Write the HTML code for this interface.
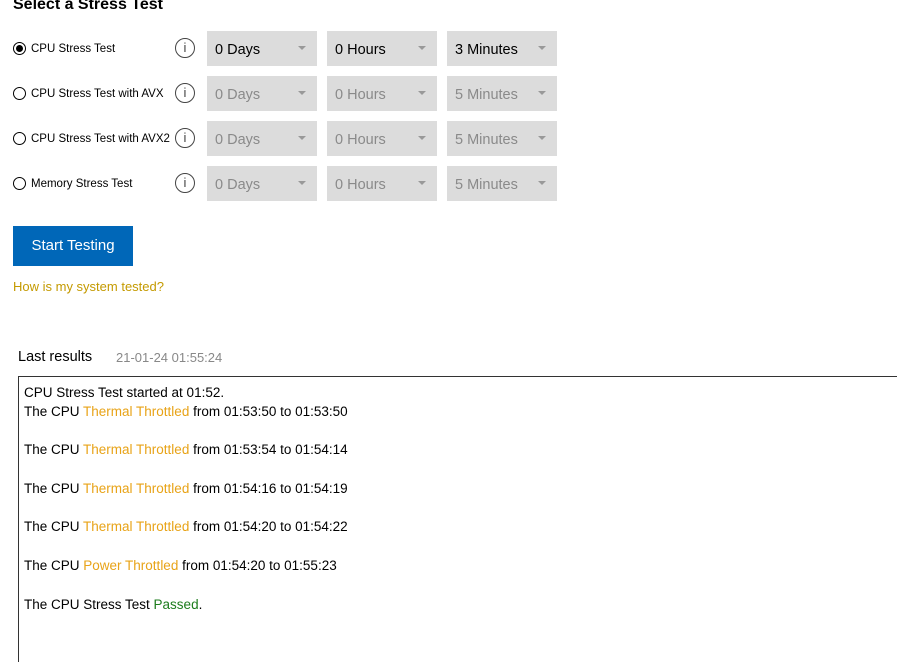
<!DOCTYPE html>
<html style="overflow:hidden;height:662px"><head><style>
body{margin:0;width:897px;height:662px;overflow:hidden;background:#fff;font-family:"Liberation Sans",sans-serif;color:#000;position:relative}
.a{position:absolute;white-space:nowrap}
h1{position:absolute;left:13px;top:-4px;margin:0;font-size:16px;font-weight:bold;}
.radio{position:absolute;left:13px;width:11px;height:11px;border:1px solid #000;border-radius:50%}
.radio.on::after{content:"";position:absolute;left:2px;top:2px;width:7px;height:7px;border-radius:50%;background:#000}
.lbl{position:absolute;left:31px;font-size:11.5px}
.info{position:absolute;left:175px;width:18px;height:18px;border:1.5px solid #444;border-radius:50%;font-size:13px;text-align:center;line-height:18px;color:#444}
.dd{position:absolute;width:110px;height:35px;background:#dcdcdc;font-size:14.5px;line-height:39px;text-indent:8px;color:#8a8a8a}
.dd.on{color:#000}
.dd::after{content:"";position:absolute;right:11px;top:15px;border-left:4px solid transparent;border-right:4px solid transparent;border-top:4px solid #999}
.box{position:absolute;left:18px;top:376px;width:890px;height:300px;border:1px solid #333;font-size:13.5px}
.box div{position:absolute;left:5px;white-space:nowrap}
.o{color:#e8a317}.g{color:#1c7c1c}
</style></head><body>
<h1>Select a Stress Test</h1>
<div class="radio on" style="top:42px"></div><div class="lbl" style="top:43px">CPU Stress Test</div>
<div class="radio" style="top:87px"></div><div class="lbl" style="top:88px">CPU Stress Test with AVX</div>
<div class="radio" style="top:132px"></div><div class="lbl" style="top:133px">CPU Stress Test with AVX2</div>
<div class="radio" style="top:177px"></div><div class="lbl" style="top:178px">Memory Stress Test</div>
<div class="info" style="top:38px">i</div><div class="info" style="top:83px">i</div><div class="info" style="top:128px">i</div><div class="info" style="top:173px">i</div>
<div class="dd on" style="left:207px;top:31px">0 Days</div><div class="dd on" style="left:327px;top:31px">0 Hours</div><div class="dd on" style="left:447px;top:31px">3 Minutes</div>
<div class="dd" style="left:207px;top:76px">0 Days</div><div class="dd" style="left:327px;top:76px">0 Hours</div><div class="dd" style="left:447px;top:76px">5 Minutes</div>
<div class="dd" style="left:207px;top:121px">0 Days</div><div class="dd" style="left:327px;top:121px">0 Hours</div><div class="dd" style="left:447px;top:121px">5 Minutes</div>
<div class="dd" style="left:207px;top:166px">0 Days</div><div class="dd" style="left:327px;top:166px">0 Hours</div><div class="dd" style="left:447px;top:166px">5 Minutes</div>
<div class="a" style="left:13px;top:226px;width:120px;height:40px;background:#0067b8;color:#fff;font-size:15px;line-height:40px;text-align:center">Start Testing</div>
<div class="a" style="left:13px;top:279px;font-size:13px;color:#c49a00">How is my system tested?</div>
<div class="a" style="left:18px;top:349px;font-size:14.5px">Last results</div>
<div class="a" style="left:116px;top:350px;font-size:13px;color:#888">21-01-24 01:55:24</div>
<div class="box">
<div style="top:8px">CPU Stress Test started at 01:52.</div>
<div style="top:27px">The CPU <span class="o">Thermal Throttled</span> from 01:53:50 to 01:53:50</div>
<div style="top:65px">The CPU <span class="o">Thermal Throttled</span> from 01:53:54 to 01:54:14</div>
<div style="top:104px">The CPU <span class="o">Thermal Throttled</span> from 01:54:16 to 01:54:19</div>
<div style="top:142px">The CPU <span class="o">Thermal Throttled</span> from 01:54:20 to 01:54:22</div>
<div style="top:181px">The CPU <span class="o">Power Throttled</span> from 01:54:20 to 01:55:23</div>
<div style="top:220px">The CPU Stress Test <span class="g">Passed</span>.</div>
</div>
</body></html>
